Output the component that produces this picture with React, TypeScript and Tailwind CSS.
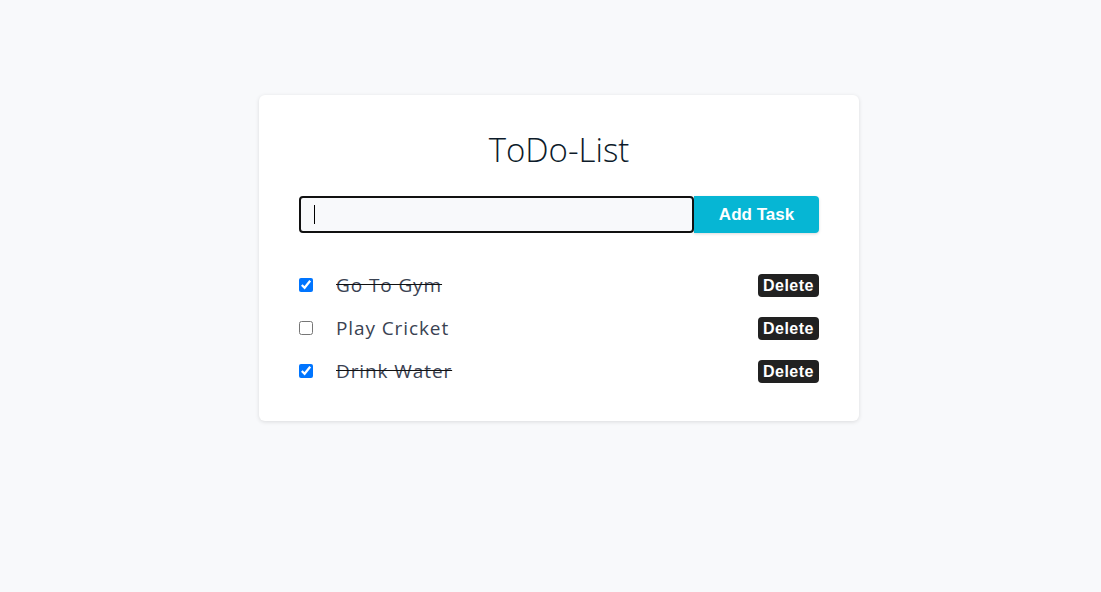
import React, { useState } from "react";

type Task = { id: number; text: string; done: boolean };

export default function App() {
  const [tasks, setTasks] = useState<Task[]>([
    { id: 1, text: "Go To Gym", done: true },
    { id: 2, text: "Play Cricket", done: false },
    { id: 3, text: "Drink Water", done: true },
  ]);
  const [value, setValue] = useState("");

  return (
    <div className="min-h-[592px] bg-[#f8f9fb] flex justify-center pl-[17px] pt-[95px]" style={{ fontFamily: '"Open Sans", "Noto Sans", sans-serif' }}>
      <div className="w-[600px] h-[326px] bg-white rounded-[6px] shadow-[0_1px_4px_rgba(0,0,0,0.12)] px-10 pt-[31px]">
        <h1 className="text-center text-[33px] font-light leading-[48px] text-[#0d1b2a] mb-[22px]">ToDo-List</h1>
        <div className="flex h-[37px]">
          <div className="relative flex-1 flex">
            <input
              value={value}
              onChange={(e) => setValue(e.target.value)}
              className="flex-1 border-2 border-[#111] rounded-[4px] bg-[#f8f9fb] outline-none px-[14px] text-[16px]"
            />
            {value === "" && <span className="absolute left-[15px] top-[9px] w-[1px] h-[19px] bg-black pointer-events-none" />}
          </div>
          <button className="w-[125px] bg-[#06b6d4] text-white rounded-r-[4px] text-[17px] font-bold shadow-[0_1px_3px_rgba(0,0,0,0.15)]" style={{ fontFamily: '"Liberation Sans", Arial, sans-serif' }}>
            Add Task
          </button>
        </div>
        <ul className="mt-[31px]">
          {tasks.map((t) => (
            <li key={t.id} className="flex items-center h-[43px]">
              <input
                type="checkbox"
                checked={t.done}
                onChange={() => setTasks(tasks.map((x) => (x.id === t.id ? { ...x, done: !x.done } : x)))}
                className="w-[14px] h-[14px] m-0 -mt-[1px]"
              />
              <span className={`ml-[23px] flex-1 text-[19px] tracking-[0.9px] text-[#3a4252] ${t.done ? "line-through decoration-[#111]" : ""}`}>
                {t.text}
              </span>
              <button className="h-[23px] px-[5px] bg-[#212121] text-white rounded-[4px] text-[16px] font-bold tracking-[0.5px] leading-none" style={{ fontFamily: '"Liberation Sans", Arial, sans-serif' }}>
                Delete
              </button>
            </li>
          ))}
        </ul>
      </div>
    </div>
  );
}
